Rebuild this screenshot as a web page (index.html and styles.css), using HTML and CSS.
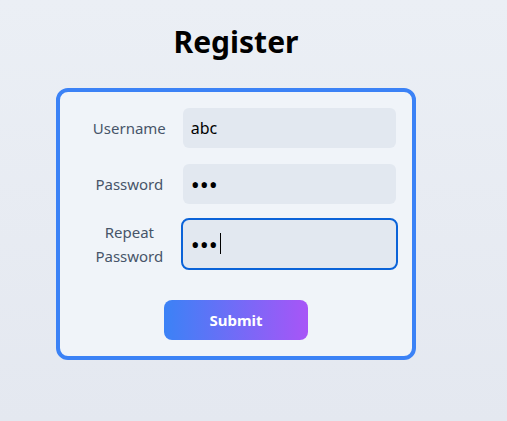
FILE: index.html
```html
<!DOCTYPE html>
<html lang="en">
<head>
<meta charset="utf-8">
<title>Register</title>
<link rel="stylesheet" href="styles.css">
</head>
<body>
<main class="page">
  <h1 class="title">Register</h1>
  <form class="card">
    <div class="row">
      <label class="label" for="u">Username</label>
      <input class="field" id="u" type="text" value="abc">
    </div>
    <div class="row">
      <label class="label" for="p">Password</label>
      <input class="field secret" id="p" type="password" value="abc">
    </div>
    <div class="row">
      <label class="label" for="r">Repeat<br>Password</label>
      <div class="field-wrap">
        <input class="field secret focused" id="r" type="password" value="abc">
        <span class="caret"></span>
      </div>
    </div>
    <div class="actions">
      <button class="submit" type="button">Submit</button>
    </div>
  </form>
</main>
</body>
</html>
```
FILE: styles.css
```css
html, body {
  margin: 0;
  height: 100%;
}
body {
  background: linear-gradient(180deg, #ebeff5 0%, #e4e8f0 100%);
  font-family: "Noto Sans", "Open Sans", sans-serif;
  color: #111;
}
.page {
  width: 360px;
  margin-left: 56px;
  padding-top: 24px;
}
.title {
  margin: 0 0 28px;
  text-align: center;
  font-size: 30px;
  line-height: 36px;
  font-weight: 700;
  color: #000;
}
.card {
  box-sizing: border-box;
  background: #f0f4f9;
  border: 4px solid #3b82f6;
  border-radius: 12px;
  padding: 16px;
  display: flex;
  flex-direction: column;
  gap: 16px;
}
.row {
  display: grid;
  grid-template-columns: minmax(0, 1fr) minmax(0, 2fr);
}
.label {
  display: flex;
  align-items: center;
  justify-content: center;
  text-align: center;
  font-size: 15px;
  line-height: 24px;
  color: #475569;
}
.field {
  box-sizing: border-box;
  width: 100%;
  min-width: 0;
  min-height: 40px;
  height: 100%;
  border: none;
  border-radius: 6px;
  background: #e2e8f0;
  padding: 0 8px;
  font-family: inherit;
  font-size: 16px;
  color: #000;
  outline: none;
}
.field.secret {
  font-size: 24px;
  letter-spacing: 0;
}
.field.focused {
  outline: 2px solid #0b63d8;
  outline-offset: 0;
}
.field-wrap {
  position: relative;
  display: flex;
}
.caret {
  position: absolute;
  left: 37px;
  top: 13px;
  width: 1px;
  height: 21px;
  background: #000;
}
.actions {
  display: flex;
  justify-content: center;
  margin-top: 16px;
}
.submit {
  width: 144px;
  height: 40px;
  border: none;
  border-radius: 8px;
  background: linear-gradient(90deg, #3b82f6, #a855f7);
  color: #fff;
  font-family: inherit;
  font-size: 15px;
  font-weight: 700;
}
```
